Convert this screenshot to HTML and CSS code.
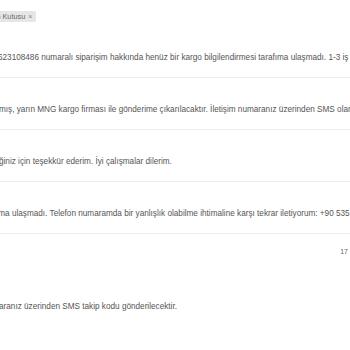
FILE: index.html
```html
<!DOCTYPE html>
<html lang="tr">
<head>
<meta charset="utf-8">
<link rel="stylesheet" href="styles.css">
</head>
<body>
<div class="page">
  <div class="filters">
    <span class="tag">Gelen Kutusu <span class="x">×</span></span>
  </div>
  <ul class="list">
    <li class="row"><p class="msg shift1">623108486 numaralı siparişim hakkında henüz bir kargo bilgilendirmesi tarafıma ulaşmadı. 1-3 iş günü içinde</p></li>
    <li class="row"><p class="msg shift2">mış, yarın MNG kargo firması ile gönderime çıkarılacaktır. İletişim numaranız üzerinden SMS olarak</p></li>
    <li class="row"><p class="msg shift3">ğiniz için teşekkür ederim. İyi çalışmalar dilerim.</p></li>
    <li class="row"><p class="msg shift4">ıma ulaşmadı. Telefon numaramda bir yanlışlık olabilme ihtimaline karşı tekrar iletiyorum: +90 535</p></li>
  </ul>
  <div class="pager"><span class="count">17</span></div>
  <p class="msg reply">aranız üzerinden SMS takip kodu gönderilecektir.</p>
</div>
</body>
</html>
```
FILE: styles.css
```css
html, body {
  margin: 0;
  padding: 0;
  background: #ffffff;
}
body {
  width: 350px;
  height: 350px;
  overflow: hidden;
  font-family: "Liberation Sans", Arial, sans-serif;
  color: #555555;
}
.page {
  width: 350px;
  overflow: hidden;
}
.filters {
  display: flex;
  align-items: flex-start;
  height: 26px;
  padding-top: 11px;
  box-sizing: border-box;
  white-space: nowrap;
}
.tag {
  display: block;
  height: 11px;
  line-height: 11px;
  font-size: 7.3px;
  color: #666666;
  background: #e6e6e6;
  border-radius: 2px;
  padding: 0 3px 0 2px;
  margin-left: -21px;
}
.tag .x {
  color: #888888;
  margin-left: 1px;
}
.list {
  list-style: none;
  margin: 0;
  padding: 0;
}
.row {
  padding: 26px 0 14px;
  border-bottom: 1px solid #ededed;
}
.msg {
  margin: 0;
  font-size: 8.2px;
  line-height: 11px;
  white-space: nowrap;
  color: #555555;
}
.shift1 { margin-left: -2px; }
.shift2 { margin-left: -1px; }
.shift3 { margin-left: -1px; }
.shift4 { margin-left: -4px; }
.pager {
  display: flex;
  justify-content: flex-end;
  padding: 13px 2px 0 0;
  height: 10px;
}
.count {
  font-size: 7px;
  line-height: 10px;
  color: #666666;
}
.reply {
  margin-top: 44px;
  margin-left: -1px;
}
```
